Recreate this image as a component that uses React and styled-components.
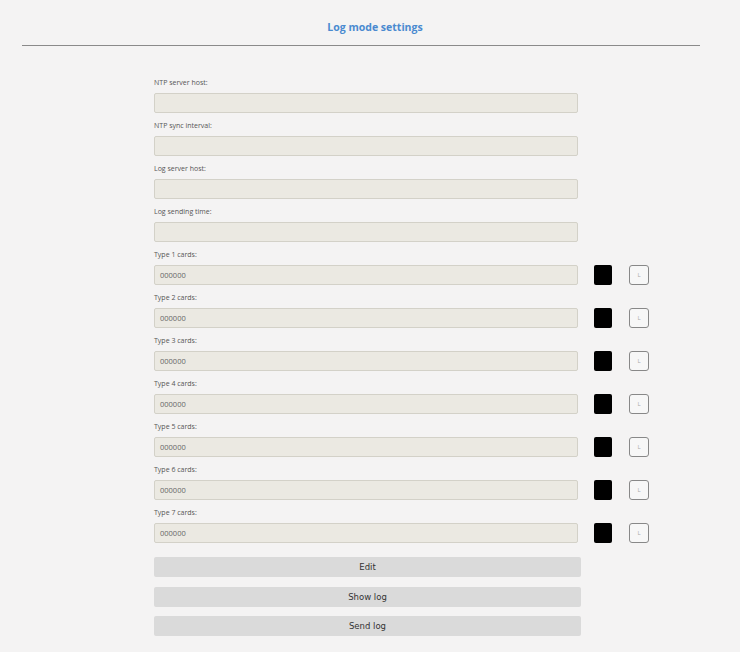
import React from "react";
import styled, { createGlobalStyle } from "styled-components";

const Global = createGlobalStyle`
  html, body { margin: 0; background: #f4f3f3; }
  body { font-family: "Open Sans", "Liberation Sans", sans-serif; }
`;

const Page = styled.div`
  width: 678px;
  margin-left: 22px;
  min-height: 652px;
`;
const Header = styled.div`
  height: 46px;
  border-bottom: 1.5px solid #8a8a8a;
  display: flex;
  justify-content: center;
  align-items: flex-start;
  padding-top: 20px;
  box-sizing: border-box;
`;
const Title = styled.h1`
  margin: 0;
  font-size: 10.5px;
  font-weight: 700;
  color: #4a8ad0;
  padding-left: 28px;
`;
const Form = styled.div`
  padding: 31px 0 0 132px;
  display: flex;
  flex-direction: column;
`;
const Field = styled.div`
  display: flex;
  flex-direction: column;
  margin-bottom: 7px;
`;
const Label = styled.label`
  font-size: 7px;
  color: #555;
  height: 12px;
  line-height: 12px;
  margin-bottom: 4px;
`;
const Row = styled.div`
  display: flex;
  align-items: center;
`;
const Input = styled.div`
  width: 424px;
  height: 20px;
  box-sizing: border-box;
  background: #ebe9e2;
  border: 1px solid #d3d1c8;
  border-radius: 2px;
  font-size: 7.5px;
  color: #666;
  padding-left: 5px;
  display: flex;
  align-items: center;
`;
const Swatch = styled.div`
  width: 18px;
  height: 20px;
  background: #000;
  border-radius: 2px;
  margin-left: 16px;
`;
const LBtn = styled.div`
  width: 20px;
  height: 20px;
  box-sizing: border-box;
  margin-left: 17px;
  border: 1px solid #888;
  border-radius: 3px;
  background: #f7f7f7;
  font-size: 6px;
  color: #aaa;
  display: flex;
  align-items: center;
  justify-content: center;
`;
const Buttons = styled.div`
  display: flex;
  flex-direction: column;
  gap: 9.5px;
  margin-top: 7px;
`;
const Button = styled.div`
  width: 427px;
  height: 20px;
  background: #dadada;
  border-radius: 2px;
  font-size: 8.5px;
  color: #333;
  font-family: "DejaVu Sans", sans-serif;
  display: flex;
  align-items: center;
  justify-content: center;
`;

const plain = ["NTP server host:", "NTP sync interval:", "Log server host:", "Log sending time:"];

export default function App() {
  return (
    <Page>
      <Global />
      <Header><Title>Log mode settings</Title></Header>
      <Form>
        {plain.map((l) => (
          <Field key={l}>
            <Label>{l}</Label>
            <Input />
          </Field>
        ))}
        {[1, 2, 3, 4, 5, 6, 7].map((n) => (
          <Field key={n}>
            <Label>{`Type ${n} cards:`}</Label>
            <Row>
              <Input>000000</Input>
              <Swatch />
              <LBtn>L</LBtn>
            </Row>
          </Field>
        ))}
        <Buttons>
          <Button>Edit</Button>
          <Button>Show log</Button>
          <Button>Send log</Button>
        </Buttons>
      </Form>
    </Page>
  );
}
